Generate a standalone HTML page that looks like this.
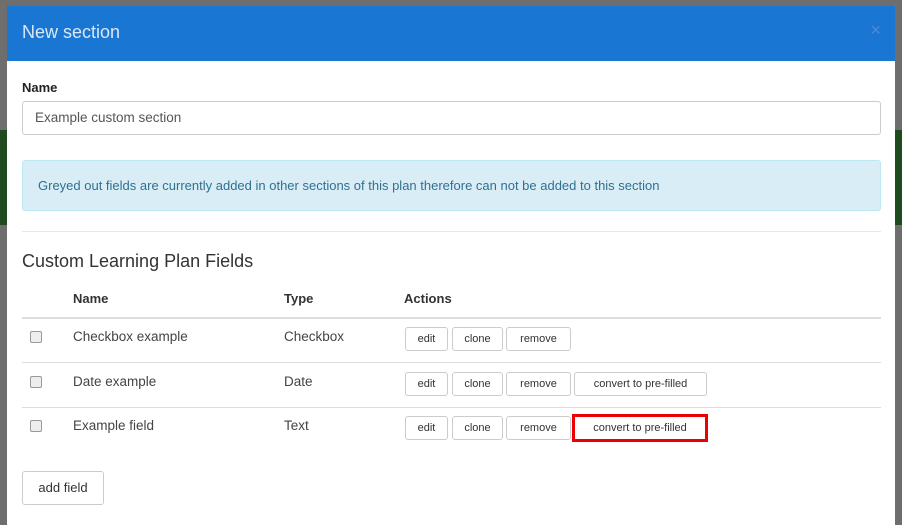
<!DOCTYPE html>
<html><head><meta charset="utf-8"><style>
*{box-sizing:border-box;margin:0;padding:0}
body{width:902px;height:525px;overflow:hidden;background:#6e6e6e;font-family:"Liberation Sans",sans-serif;position:relative;color:#333}
.side{position:absolute;top:130px;height:95px;width:8px;background:#1f4a1f}
.modal{position:absolute;left:7px;top:6px;width:888px;height:519px;background:#fff}
.hdr{height:55px;background:#1976d2;position:relative}
.hdr h1{position:absolute;left:15px;top:16px;font-size:18px;font-weight:normal;color:#dbe8f7}
.hdr .x{position:absolute;right:14px;top:14px;font-size:18px;color:#4f8bd2}
.abs{position:absolute}
.lbl{left:15px;top:74px;font-size:13px;font-weight:bold;color:#222}
.inp{left:15px;top:95px;width:859px;height:34px;border:1px solid #ccc;border-radius:3px;font-size:13.5px;color:#555;padding:8px 12px}
.alert{left:15px;top:154px;width:859px;height:51px;background:#d9edf7;border:1px solid #bce8f1;border-radius:3px;color:#31708f;font-size:13px;padding:17px 15px}
.hr{left:15px;top:225px;width:859px;height:1px;background:#e8e8e8}
.h3{left:15px;top:245px;font-size:18px;color:#333}
.th{top:285px;font-size:13px;font-weight:bold;color:#333}
.line{left:15px;width:859px;height:1px;background:#ddd}
.cell{font-size:13.5px;color:#444}
.cb{width:12px;height:12px;border:1px solid #999;border-radius:2px;background:#eee;left:23px}
.btn{height:24px;border:1px solid #ccc;border-radius:3px;font-size:11px;color:#333;text-align:center;line-height:22px;background:#fff}
</style></head><body>
<div class="side" style="left:0"></div><div class="side" style="right:0"></div>
<div class="modal">
<div class="hdr"><h1>New section</h1><div class="x">×</div></div>
<div class="abs lbl">Name</div>
<div class="abs inp">Example custom section</div>
<div class="abs alert">Greyed out fields are currently added in other sections of this plan therefore can not be added to this section</div>
<div class="abs hr"></div>
<div class="abs h3">Custom Learning Plan Fields</div>
<div class="abs th" style="left:66px">Name</div>
<div class="abs th" style="left:277px">Type</div>
<div class="abs th" style="left:397px">Actions</div>
<div class="abs line" style="top:311px;height:2px"></div>
<div class="abs line" style="top:356px"></div>
<div class="abs line" style="top:401px"></div>

<div class="abs cb" style="top:325px"></div>
<div class="abs cell" style="left:66px;top:323px">Checkbox example</div>
<div class="abs cell" style="left:277px;top:323px">Checkbox</div>
<div class="abs btn" style="left:398px;top:321px;width:43px">edit</div>
<div class="abs btn" style="left:445px;top:321px;width:51px">clone</div>
<div class="abs btn" style="left:499px;top:321px;width:65px">remove</div>

<div class="abs cb" style="top:370px"></div>
<div class="abs cell" style="left:66px;top:368px">Date example</div>
<div class="abs cell" style="left:277px;top:368px">Date</div>
<div class="abs btn" style="left:398px;top:366px;width:43px">edit</div>
<div class="abs btn" style="left:445px;top:366px;width:51px">clone</div>
<div class="abs btn" style="left:499px;top:366px;width:65px">remove</div>
<div class="abs btn" style="left:567px;top:366px;width:133px">convert to pre-filled</div>

<div class="abs cb" style="top:414px"></div>
<div class="abs cell" style="left:66px;top:412px">Example field</div>
<div class="abs cell" style="left:277px;top:412px">Text</div>
<div class="abs btn" style="left:398px;top:410px;width:43px">edit</div>
<div class="abs btn" style="left:445px;top:410px;width:51px">clone</div>
<div class="abs btn" style="left:499px;top:410px;width:65px">remove</div>
<div class="abs btn" style="left:565px;top:408px;width:136px;height:28px;border:3px solid #e00;line-height:22px;border-radius:0">convert to pre-filled</div>

<div class="abs btn" style="left:15px;top:465px;width:82px;height:34px;line-height:32px;font-size:13px">add field</div>
</div>
</body></html>
